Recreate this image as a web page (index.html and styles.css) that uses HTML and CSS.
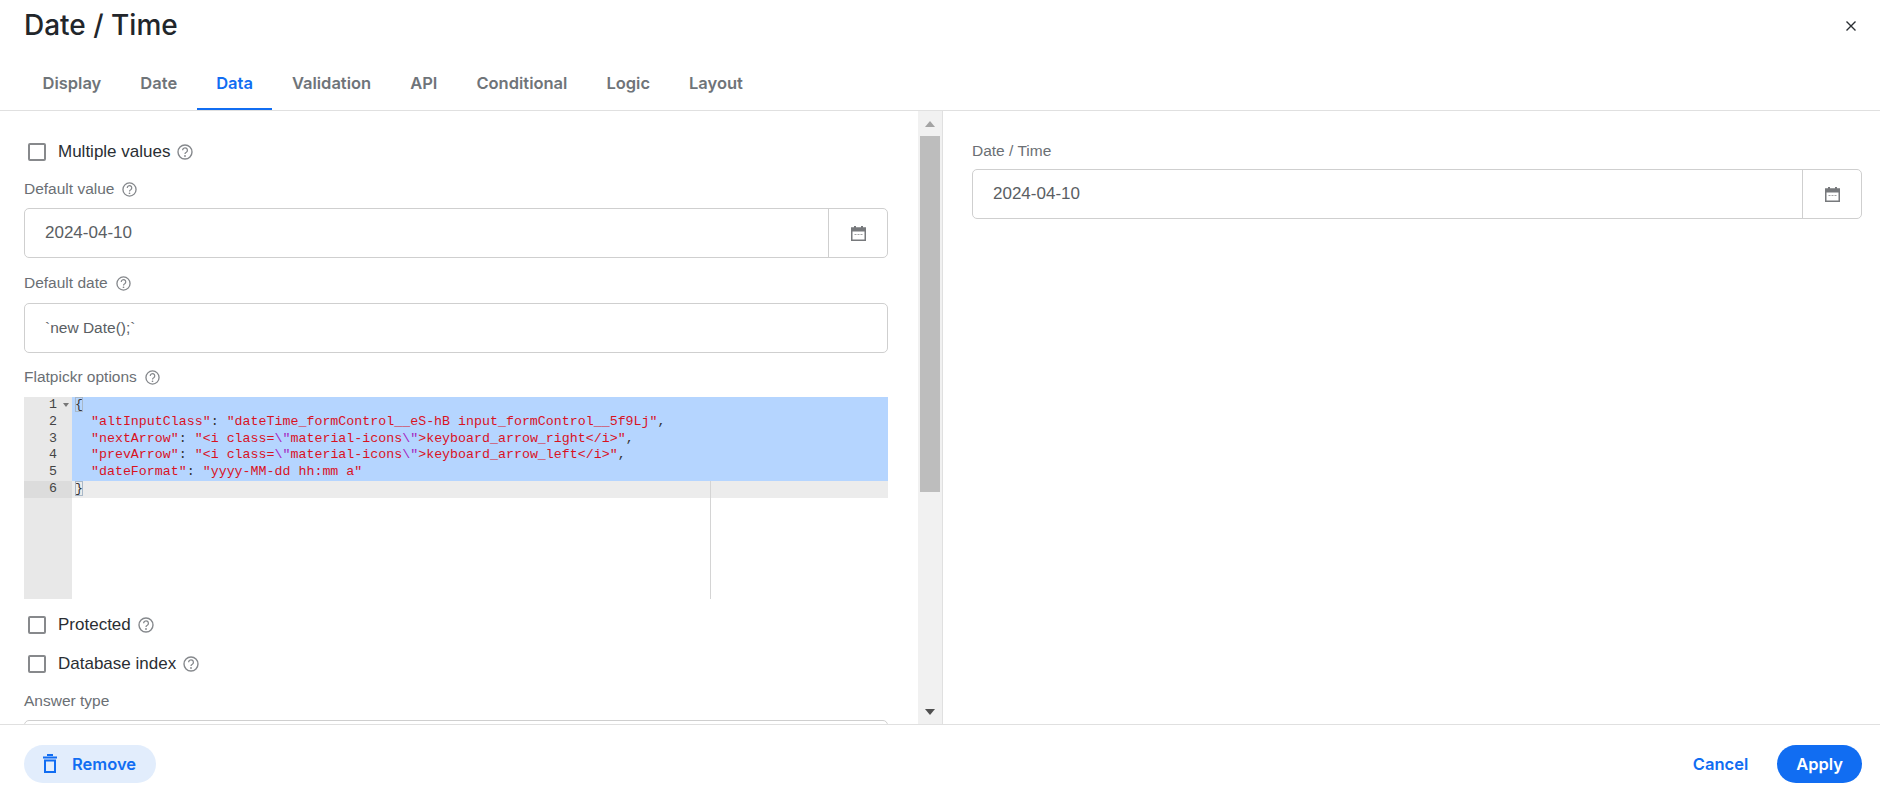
FILE: index.html
```html
<!DOCTYPE html>
<html lang="en">
<head>
	<meta charset="UTF-8">
	<title>Date / Time</title>
	<link rel="stylesheet" href="styles.css">
</head>
<body>
	<svg class="defs" width="0" height="0">
		<symbol id="help" viewBox="0 0 16 16">
			<circle cx="8" cy="8" r="7" fill="none" stroke="currentColor" stroke-width="1.4"/>
			<path d="M5.6 6.3a2.4 2.4 0 1 1 3.7 2c-.9.5-1.3.9-1.3 1.8" fill="none" stroke="currentColor" stroke-width="1.3"/>
			<circle cx="8" cy="12" r=".9" fill="currentColor"/>
		</symbol>
		<symbol id="calendar" viewBox="0 0 15 15">
			<path d="M.75 4h13.5v10.25H.75z" fill="none" stroke="currentColor" stroke-width="1.5"/>
			<path d="M0 1.2h15v4.3H0zM3 0h2v1.2H3zM10 0h2v1.2h-2z" fill="currentColor"/>
			<path d="M3.5 8h2v1h-2zM6.5 8h2v1h-2zM9.5 8h2v1h-2z" fill="currentColor" opacity=".7"/>
		</symbol>
	</svg>

	<div class="modal">
		<div class="modal-head">
			<h1>Date / Time</h1>
			<svg class="close" viewBox="0 0 12 12"><path d="M1.5 1.5l9 9M10.5 1.5l-9 9" stroke="#2a2e33" stroke-width="1.4"/></svg>
		</div>

		<div class="tabs">
			<div class="tab">Display</div>
			<div class="tab">Date</div>
			<div class="tab active">Data</div>
			<div class="tab">Validation</div>
			<div class="tab">API</div>
			<div class="tab">Conditional</div>
			<div class="tab">Logic</div>
			<div class="tab">Layout</div>
		</div>

		<div class="modal-body">
			<div class="settings">
				<div class="settings-inner">
					<div class="check-row first">
						<span class="box"></span>Multiple values
						<svg class="help"><use href="#help"/></svg>
					</div>

					<div class="label top">Default value<svg class="help"><use href="#help"/></svg></div>
					<div class="input">
						<div class="value">2024-04-10</div>
						<div class="addon"><svg class="cal"><use href="#calendar"/></svg></div>
					</div>

					<div class="label gap">Default date<svg class="help"><use href="#help"/></svg></div>
					<div class="input">
						<div class="value code-ish">`new Date();`</div>
					</div>

					<div class="label gap flat">Flatpickr options<svg class="help"><use href="#help"/></svg></div>
					<div class="editor">
						<div class="gutter">
							<div class="num">1<span class="fold"></span></div>
							<div class="num">2</div>
							<div class="num">3</div>
							<div class="num">4</div>
							<div class="num">5</div>
							<div class="num cur">6</div>
						</div>
						<div class="code">
							<div class="line sel"><span class="brace">{</span></div>
							<div class="line sel">  <span class="str">"altInputClass"</span>: <span class="str">"dateTime_formControl__eS-hB input_formControl__5f9Lj"</span>,</div>
							<div class="line sel">  <span class="str">"nextArrow"</span>: <span class="str">"&lt;i class=<span class="esc">\"</span>material-icons<span class="esc">\"</span>&gt;keyboard_arrow_right&lt;/i&gt;"</span>,</div>
							<div class="line sel">  <span class="str">"prevArrow"</span>: <span class="str">"&lt;i class=<span class="esc">\"</span>material-icons<span class="esc">\"</span>&gt;keyboard_arrow_left&lt;/i&gt;"</span>,</div>
							<div class="line sel">  <span class="str">"dateFormat"</span>: <span class="str">"yyyy-MM-dd hh:mm a"</span></div>
							<div class="line cur"><span class="brace">}</span></div>
							<div class="margin-line"></div>
						</div>
					</div>

					<div class="check-row protect">
						<span class="box"></span>Protected
						<svg class="help"><use href="#help"/></svg>
					</div>
					<div class="check-row db">
						<span class="box"></span>Database index
						<svg class="help"><use href="#help"/></svg>
					</div>

					<div class="label answer">Answer type</div>
					<div class="input"></div>
				</div>
			</div>

			<div class="scrollbar">
				<div class="arrow up"></div>
				<div class="track"><div class="thumb"></div></div>
				<div class="arrow down"></div>
			</div>

			<div class="preview">
				<div class="label">Date / Time</div>
				<div class="input">
					<div class="value">2024-04-10</div>
					<div class="addon"><svg class="cal"><use href="#calendar"/></svg></div>
				</div>
			</div>
		</div>

		<div class="modal-foot">
			<div class="btn remove">
				<svg class="trash" viewBox="0 0 14 19"><path d="M0 3.5h14M4 1h6" stroke="currentColor" stroke-width="2" fill="none"/><path d="M2 6.5h10V18H2z" stroke="currentColor" stroke-width="2" fill="none"/></svg>
				Remove
			</div>
			<div class="foot-right">
				<div class="btn cancel">Cancel</div>
				<div class="btn apply">Apply</div>
			</div>
		</div>
	</div>
</body>
</html>
```

FILE: styles.css
```css
html, body{
	margin: 0;
	height: 100%;
	background: #fff;
	overflow: hidden;
}

body{
	font-family: "Liberation Sans", Arial, sans-serif;
	font-size: 17px;
	color: #2a2e33;
}

.defs{
	position: absolute;
}

.modal{
	display: flex;
	flex-direction: column;
	height: 794px;
}

.modal-head{
	display: flex;
	justify-content: space-between;
	align-items: center;
	height: 50px;
	padding: 0 23px 0 24px;
}

.modal-head h1{
	margin: 0;
	font-family: Inter, sans-serif;
	font-size: 28px;
	font-weight: 500;
	color: #22262b;
}

.close{
	width: 12px;
	height: 12px;
	margin-top: 2px;
}

.tabs{
	display: flex;
	height: 61px;
	padding-left: 23px;
	box-sizing: border-box;
	border-bottom: 1px solid #e0e0e0;
	font-family: Inter, sans-serif;
	font-size: 16.5px;
	font-weight: 600;
	color: #6f7479;
}

.tab{
	height: 60px;
	line-height: 66px;
	padding: 0 19.5px;
	box-sizing: border-box;
}

.tab.active{
	color: #116df2;
	border-bottom: 2px solid #116df2;
}

.modal-body{
	flex: 1;
	display: flex;
	min-height: 0;
}

.settings{
	width: 918px;
	overflow: hidden;
}

.settings-inner{
	padding: 29px 30px 0 24px;
}

.check-row{
	display: flex;
	align-items: center;
	height: 24px;
}

.box{
	width: 14px;
	height: 14px;
	margin: 0 12px 0 4px;
	border: 2px solid #87898c;
	border-radius: 2px;
}

.help{
	width: 16px;
	height: 16px;
	margin-left: 7px;
	color: #85888c;
}

.label .help{
	width: 15px;
	height: 15px;
	margin-left: 8px;
	vertical-align: -3px;
}

.label{
	color: #6b6f74;
	font-size: 15.5px;
	line-height: 24px;
	margin-bottom: 7px;
}

.label.top{
	margin-top: 13px;
}

.label.gap{
	margin-top: 13px;
	margin-bottom: 8px;
}

.label.flat{
	margin-top: 12px;
	margin-bottom: 8px;
}

.input{
	display: flex;
	height: 50px;
	box-sizing: border-box;
	border: 1px solid #cfcfcf;
	border-radius: 5px;
}

.value{
	flex: 1;
	padding-left: 20px;
	line-height: 48px;
	color: #5a5e63;
}

.value.code-ish{
	font-size: 15.5px;
}

.addon{
	display: flex;
	align-items: center;
	justify-content: center;
	width: 58px;
	border-left: 1px solid #cfcfcf;
}

.cal{
	width: 15px;
	height: 15px;
	color: #77797c;
}

.editor{
	display: flex;
	height: 202px;
	font-family: "Liberation Mono", monospace;
	font-size: 13.3px;
	line-height: 16.8px;
}

.gutter{
	width: 48px;
	flex-shrink: 0;
	background: #e8e8e8;
	color: #444;
}

.num{
	position: relative;
	padding-right: 15px;
	text-align: right;
	height: 16.8px;
}

.num.cur{
	background: #dcdcdc;
}

.fold{
	position: absolute;
	right: 3px;
	top: 6px;
	border-left: 3px solid transparent;
	border-right: 3px solid transparent;
	border-top: 4px solid #777;
}

.code{
	position: relative;
	flex: 1;
	padding-left: 0;
	color: #333;
}

.line{
	height: 16.8px;
	padding-left: 3px;
	white-space: pre;
}

.line.sel{
	background: #b5d5ff;
}

.line.cur{
	background: #ececec;
}

.brace{
	outline: 1px solid #a8b8c8;
	outline-offset: -1px;
}

.str{
	color: #d9121f;
}

.esc{
	color: #a51fc1;
}

.margin-line{
	position: absolute;
	left: 638px;
	top: 84px;
	bottom: 0;
	width: 1px;
	background: #d4d4d4;
}

.check-row.protect{
	margin-top: 14px;
}

.check-row.db{
	margin-top: 15px;
}

.label.answer{
	margin-top: 13px;
	margin-bottom: 7px;
}

.scrollbar{
	display: flex;
	flex-direction: column;
	width: 25px;
	box-sizing: border-box;
	background: #f1f1f1;
	border-right: 1px solid #e0e0e0;
}

.arrow{
	height: 25px;
	display: flex;
	align-items: center;
	justify-content: center;
}

.arrow.up:before{
	content: "";
	border-left: 5px solid transparent;
	border-right: 5px solid transparent;
	border-bottom: 6px solid #a3a3a3;
}

.arrow.down:before{
	content: "";
	border-left: 5px solid transparent;
	border-right: 5px solid transparent;
	border-top: 6px solid #505050;
}

.track{
	flex: 1;
}

.thumb{
	height: 356px;
	margin: 0 2px;
	background: #bdbdbd;
}

.preview{
	flex: 1;
	padding: 28px 18px 0 29px;
}

.preview .label{
	margin-bottom: 6px;
}

.modal-foot{
	display: flex;
	justify-content: space-between;
	align-items: center;
	height: 70px;
	padding: 8px 18px 0 24px;
	box-sizing: border-box;
	border-top: 1px solid #e0e0e0;
	font-family: Inter, sans-serif;
	font-size: 16.5px;
	font-weight: 600;
	color: #116df2;
}

.btn{
	display: flex;
	align-items: center;
	height: 38px;
	border-radius: 19px;
}

.remove{
	width: 132px;
	box-sizing: border-box;
	padding-left: 19px;
	background: #e2edfc;
}

.trash{
	width: 14px;
	height: 19px;
	margin-right: 15px;
}

.foot-right{
	display: flex;
	align-items: center;
	gap: 29px;
}

.apply{
	padding: 0 19px;
	background: #116df2;
	color: #fff;
}
```
